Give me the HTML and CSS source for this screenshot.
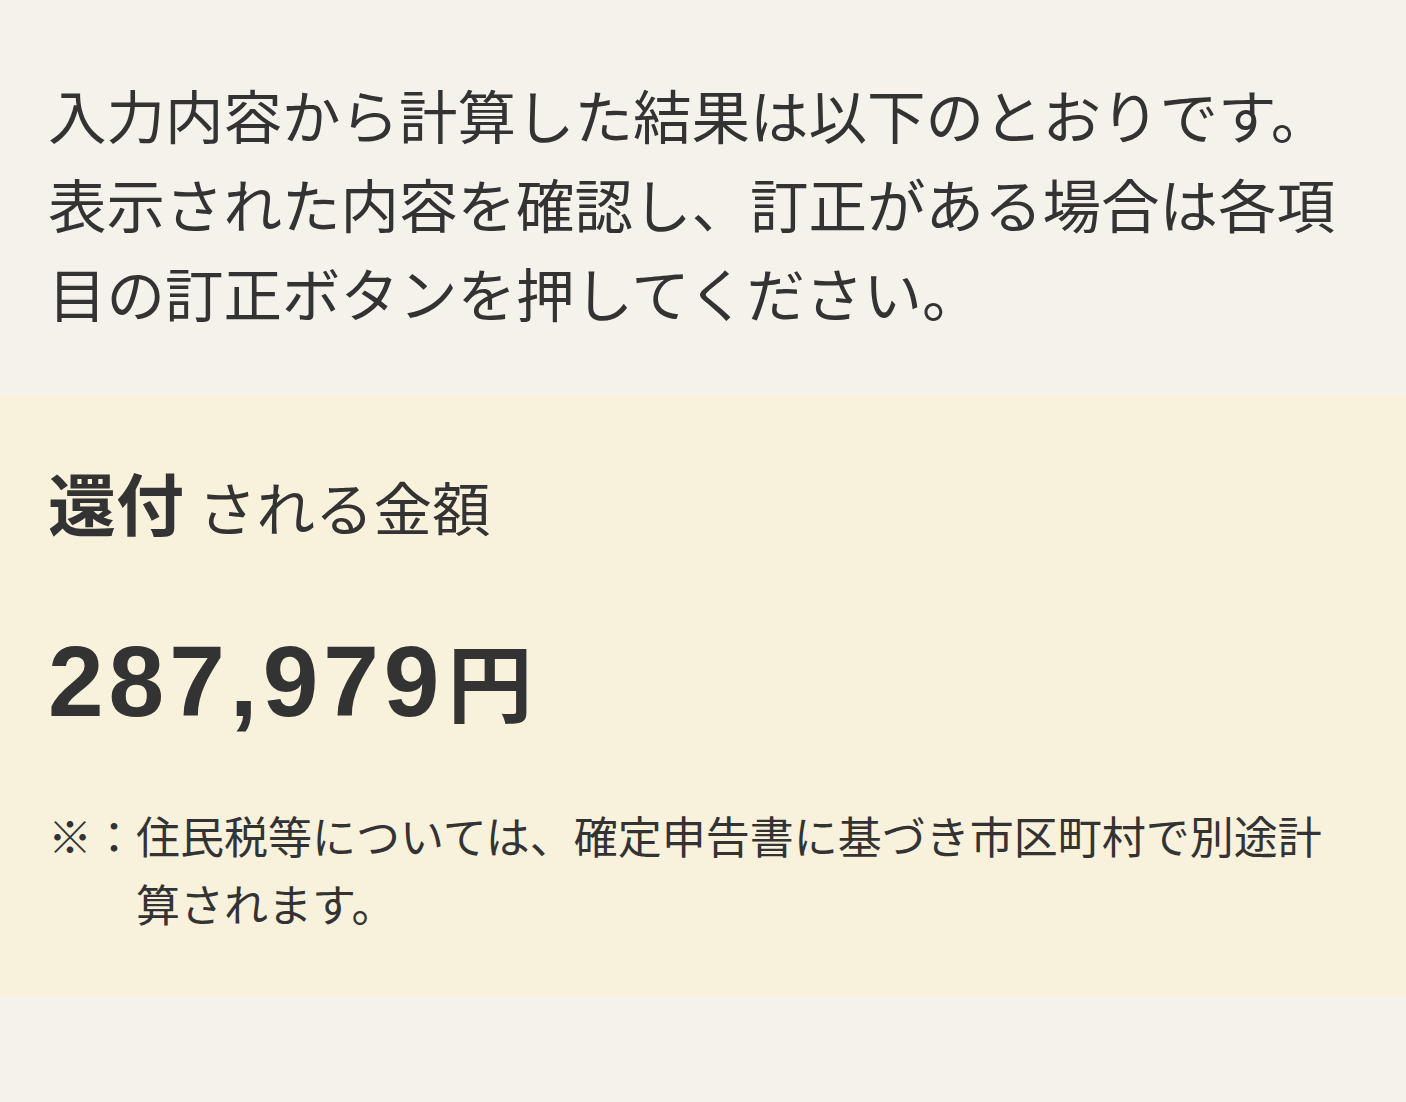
FILE: index.html
```html
<!DOCTYPE html>
<html lang="ja">
<head>
<meta charset="utf-8">
<title>計算結果</title>
<link rel="stylesheet" href="styles.css">
</head>
<body>
<main class="page">
  <p class="intro">入力内容から計算した結果は以下のとおりです。<br>表示された内容を確認し、訂正がある場合は各項目の訂正ボタンを押してください。</p>
  <section class="result">
    <h2 class="result-title"><strong class="result-key">還付</strong><span class="result-rest">される金額</span></h2>
    <p class="amount"><span class="amount-num">287,979</span><span class="amount-yen">円</span></p>
    <p class="note"><span class="note-mark">※：</span><span class="note-text">住民税等については、確定申告書に基づき市区町村で別途計算されます。</span></p>
  </section>
</main>
</body>
</html>
```
FILE: styles.css
```css
html, body {
  margin: 0;
  padding: 0;
}
body {
  background: #f5f2ec;
  color: #333333;
  font-family: "Noto Sans CJK JP", "Noto Sans", sans-serif;
}
.page {
  display: flex;
  flex-direction: column;
}
.intro {
  margin: 0;
  padding: 69px 48px 0;
  font-size: 58.5px;
  line-height: 89px;
}
.result {
  margin-top: 59px;
  background: #f8f1dc;
  padding: 73px 48px 59px;
  display: flex;
  flex-direction: column;
}
.result-title {
  margin: 0;
  font-weight: normal;
  display: flex;
  align-items: baseline;
}
.result-key {
  font-size: 68px;
  line-height: 1;
  font-weight: bold;
  margin-right: 14px;
}
.result-rest {
  font-size: 58.5px;
  line-height: 1;
}
.amount {
  margin: 93px 0 0;
  font-size: 100px;
  line-height: 100px;
  font-weight: bold;
  display: flex;
  align-items: baseline;
}
.amount-num {
  font-family: "Liberation Sans", Arial, sans-serif;
  letter-spacing: 5px;
}
.amount-yen {
  font-family: "Noto Sans CJK JP", sans-serif;
  font-size: 85px;
  margin-left: 3px;
}
.note {
  margin: 70px 0 0;
  font-size: 44px;
  line-height: 68px;
  display: flex;
}
.note-mark {
  flex: none;
}
.note-text {
  flex: 1;
}
```
